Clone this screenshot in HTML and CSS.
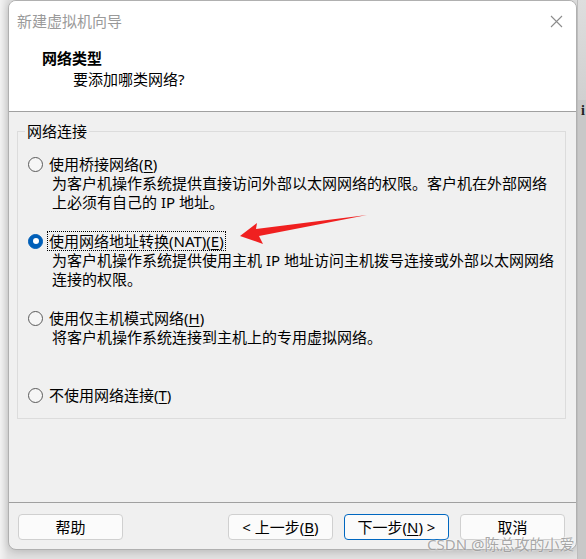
FILE: index.html
```html
<!DOCTYPE html>
<html lang="zh-CN">
<head>
<meta charset="utf-8">
<title>新建虚拟机向导</title>
<link rel="stylesheet" href="styles.css">
</head>
<body>
<div class="desktop">
  <div class="window">
    <div class="top">
      <div class="titlebar">
        <span class="title">新建虚拟机向导</span>
        <svg class="close" width="13" height="13" viewBox="0 0 13 13"><path d="M1 1L12 12M12 1L1 12" stroke="#8c8c8c" stroke-width="1.1" fill="none"/></svg>
      </div>
      <div class="header">
        <div class="h1">网络类型</div>
        <div class="h2">要添加哪类网络?</div>
      </div>
    </div>
    <div class="content">
      <fieldset class="group">
        <legend class="legend">网络连接</legend>
        <div class="opt">
          <div class="row"><span class="radio"></span><span class="label">使用桥接网络(<u>R</u>)</span></div>
          <div class="desc">为客户机操作系统提供直接访问外部以太网网络的权限。客户机在外部网络<br>上必须有自己的 IP 地址。</div>
        </div>
        <div class="opt">
          <div class="row"><span class="radio on"></span><span class="label focus">使用网络地址转换(NAT)(<u>E</u>)</span></div>
          <div class="desc">为客户机操作系统提供使用主机 IP 地址访问主机拨号连接或外部以太网网络<br>连接的权限。</div>
        </div>
        <div class="opt">
          <div class="row"><span class="radio"></span><span class="label">使用仅主机模式网络(<u>H</u>)</span></div>
          <div class="desc">将客户机操作系统连接到主机上的专用虚拟网络。</div>
        </div>
        <div class="opt last">
          <div class="row"><span class="radio"></span><span class="label">不使用网络连接(<u>T</u>)</span></div>
        </div>
      </fieldset>
    </div>
    <div class="footer">
      <button class="btn">帮助</button>
      <span class="spacer"></span>
      <button class="btn">&lt; 上一步(<u>B</u>)</button>
      <button class="btn primary">下一步(<u>N</u>) &gt;</button>
      <button class="btn">取消</button>
    </div>
  </div>
  <div class="side"><span class="side-glyph">i</span></div>
  <svg class="arrow" width="586" height="559" viewBox="0 0 586 559"><polygon points="240,236 257,223 256,229 367,215 259,236 263,244" fill="#f02020"/></svg>
  <div class="watermark">CSDN @陈总攻的小爱</div>
</div>
</body>
</html>
```
FILE: styles.css
```css
* { box-sizing: border-box; }
html, body { margin: 0; padding: 0; }
body {
  font-family: "Noto Sans", "Noto Sans CJK SC", sans-serif;
  font-size: 15px;
  color: #000;
  background: #ebebeb;
}
.desktop {
  position: relative;
  width: 586px;
  height: 559px;
  display: flex;
  padding-left: 8px;
  overflow: hidden;
  background: linear-gradient(90deg, #f2f2f2, #e2e2e2 8px, #e2e2e2);
}
.window {
  width: 569px;
  height: 550px;
  flex: none;
  display: flex;
  flex-direction: column;
  border: 1px solid #b0b0b0;
  border-radius: 8px;
  background: #f0f0f0;
  overflow: hidden;
  box-shadow: 0 2px 8px rgba(0,0,0,0.18);
}
.side {
  flex: 1;
  height: 559px;
  background: linear-gradient(180deg, #dedede 0, #d0d0d0 100px, #c8c8c8 100px, #c8c8c8);
  border-left: 1px solid #bdbdbd;
  position: relative;
}
.side-glyph {
  position: absolute;
  left: 3px;
  top: 104px;
  font-family: "Liberation Serif", serif;
  font-size: 14px;
  line-height: 14px;
  color: #222;
  font-weight: bold;
}
.top {
  background: #fff;
  border-bottom: 1px solid #a0a0a0;
  height: 111px;
  flex: none;
}
.titlebar {
  height: 40px;
  display: flex;
  align-items: center;
  justify-content: space-between;
  padding: 0 13px 0 8px;
}
.title {
  color: #9a9a9a;
  line-height: 20px;
}
.close { display: block; }
.header {
  padding: 7px 0 0 33px;
}
.h1 {
  font-weight: bold;
  line-height: 20px;
  height: 20px;
}
.h2 {
  padding-left: 31px;
  line-height: 20px;
  margin-top: 1px;
}
.content {
  flex: 1;
  padding: 9px 10px 0 8px;
}
.group {
  margin: 0;
  border: 1px solid #dcdcdc;
  padding: 0 10px 13px 10px;
  min-width: 0;
}
.legend {
  padding: 0 2px;
  margin-left: -3px;
  line-height: 20px;
}
.opt {
  margin-top: 13px;
  min-height: 58px;
}
.opt + .opt { margin-top: 19px; }
.opt.last { min-height: 0; }
.row {
  display: flex;
  align-items: center;
  height: 20px;
}
.radio {
  width: 15px;
  height: 15px;
  border-radius: 50%;
  border: 1px solid #5a5a5a;
  background: #f6f6f6;
  margin-right: 5px;
  flex: none;
  display: flex;
  align-items: center;
  justify-content: center;
}
.radio.on {
  border-color: #005fb8;
  background: #005fb8;
}
.radio.on::after {
  content: "";
  width: 6px;
  height: 6px;
  border-radius: 50%;
  background: #fff;
}
.label {
  line-height: 18px;
  padding: 0 1px;
}
.label.focus {
  outline: 1px dotted #000;
  outline-offset: 0;
}
u { text-underline-offset: 2px; }
.desc {
  padding-left: 24px;
  line-height: 19px;
}
.footer {
  flex: none;
  height: 47px;
  border-top: 1px solid #a0a0a0;
  display: flex;
  align-items: flex-start;
  gap: 11px;
  padding: 11px 11px 0 9px;
}
.spacer { flex: 1; }
.btn {
  width: 105px;
  height: 26px;
  font: inherit;
  color: #000;
  background: #fbfbfb;
  border: 1px solid #d0d0d0;
  border-radius: 4px;
  padding: 0;
  line-height: 22px;
}
.btn.primary {
  border-color: #0067c0;
}
.arrow {
  position: absolute;
  left: 0;
  top: 0;
  pointer-events: none;
}
.watermark {
  position: absolute;
  left: 427px;
  top: 534px;
  line-height: 20px;
  color: rgba(140,140,140,0.75);
  text-shadow: 0 0 2px #fff;
  white-space: nowrap;
}
```
